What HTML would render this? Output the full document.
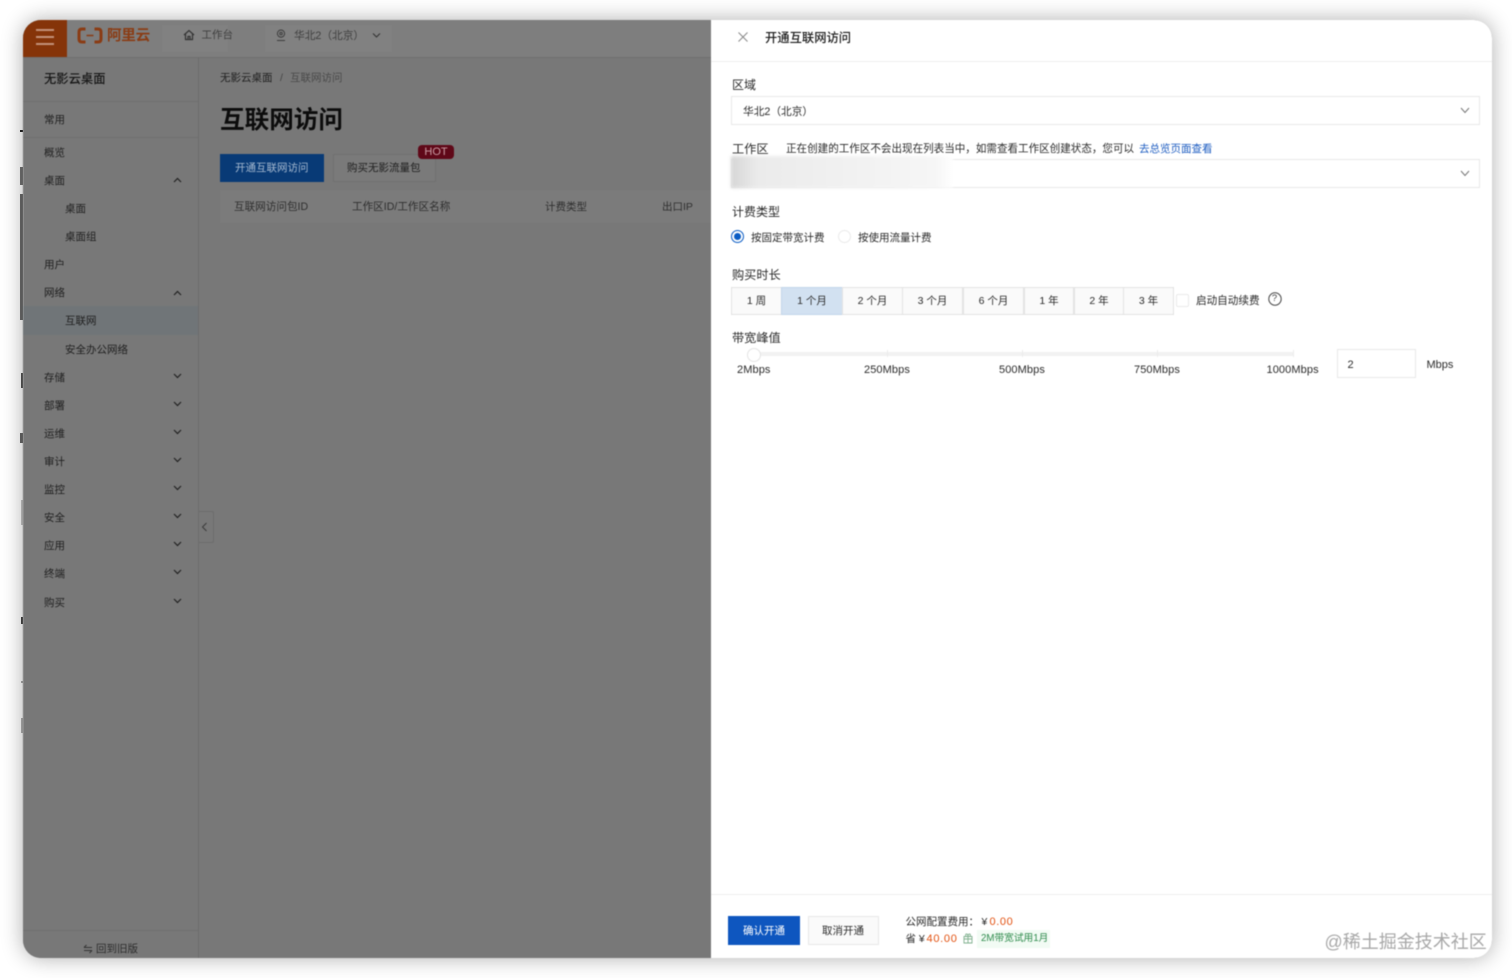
<!DOCTYPE html>
<html lang="zh-CN">
<head>
<meta charset="utf-8">
<title>开通互联网访问</title>
<style>
html,body{margin:0;padding:0;width:1512px;height:978px;overflow:hidden;background:#fff}
body{font-family:"Liberation Sans","Noto Sans CJK SC",sans-serif;position:relative}
*{box-sizing:border-box}
.win{position:absolute;left:23px;top:20px;width:1469px;height:938px;border-radius:18px;overflow:hidden;background:#787878;box-shadow:0 0 22px rgba(0,0,0,.32);filter:blur(.4px)}
.t{position:absolute;white-space:nowrap;line-height:16px;height:16px}
.m{font-size:10.5px;color:#1f1f1f}
.d{font-size:10.5px;color:#2b2b2b}
.l{font-size:12px;color:#2b2b2b}
svg{position:absolute;overflow:visible}
.left{position:absolute;left:0;top:0;width:688px;height:938px;background:#787878}
.top{position:absolute;left:0;top:0;width:688px;height:38px;background:#7e7e7e;border-bottom:1px solid #6f6f6f}
.burger{position:absolute;left:0;top:0;width:44px;height:37px;background:#853409}
.burger i{position:absolute;left:13px;width:18px;height:2px;background:#c2917a}
.side{position:absolute;left:175px;top:38px;width:1px;height:900px;background:#6c6c6c}
.hr{position:absolute;left:0;width:175px;height:1px;background:#707070}
.drawer{position:absolute;left:687.5px;top:0;width:782px;height:938px;background:#fff}
.box{position:absolute;border:1px solid #e8e8e8;background:#fff}
.seg{position:absolute;top:267px;height:28px;border:1px solid #e3e3e3;background:#fafafa;font-size:10.5px;color:#2b2b2b;text-align:center;line-height:26px;white-space:nowrap;padding-left:1px}
.tick{position:absolute;top:330px;width:1px;height:7px;background:#ececec}
.sl{position:absolute;top:343px;font-size:11px;line-height:14px;color:#2b2b2b;white-space:nowrap;letter-spacing:.1px}
.marks{position:absolute;background:#333}
</style>
</head>
<body>
<div class="marks" style="left:20px;top:130px;width:3px;height:2px;background:#222"></div>
<div class="marks" style="left:20px;top:167px;width:3px;height:18px;background:#707070"></div>
<div class="marks" style="left:20px;top:194px;width:3px;height:126px;background:#6a6a6a"></div>
<div class="marks" style="left:21px;top:373px;width:2px;height:15px;background:#555"></div>
<div class="marks" style="left:20px;top:433px;width:3px;height:10px;background:#666"></div>
<div class="marks" style="left:21px;top:500px;width:2px;height:25px;background:#c4c4c4"></div>
<div class="marks" style="left:21px;top:617px;width:2px;height:7px;background:#444"></div>
<div class="marks" style="left:21px;top:681px;width:2px;height:2px;background:#aaa"></div>
<div class="marks" style="left:21px;top:718px;width:2px;height:15px;background:#b0b0b0"></div>

<div class="win">
  <div class="left">
    <div class="top">
      <div class="burger"><i style="top:9px"></i><i style="top:16px"></i><i style="top:23px"></i></div>
      <svg style="left:54px;top:7px" width="26" height="17" viewBox="0 0 26 17" fill="none" stroke="#8a3c14" stroke-width="3"><path d="M8.5 2H5Q2 2 2 5V12Q2 15 5 15H8.5"/><path d="M17.5 2H21Q24 2 24 5V12Q24 15 21 15H17.5"/><path d="M9.5 8.5H16.5" stroke-width="1.6"/></svg>
      <div class="t" style="left:84px;top:5.5px;font-size:14.6px;height:20px;line-height:20px;font-weight:700;color:#8a3c14;letter-spacing:-.3px">阿里云</div>
      <div style="position:absolute;left:139px;top:5px;width:66px;height:27px;background:#818181"></div>
      <svg style="left:160px;top:9px" width="12" height="12" viewBox="0 0 12 12" fill="none" stroke="#333" stroke-width="1.2"><path d="M1 6L6 1.5L11 6M2.5 5V10.5H9.5V5"/><path d="M5 10V7.5H7V10"/></svg>
      <div class="t m" style="left:178.5px;top:7px;color:#3f3f3f">工作台</div>
      <div style="position:absolute;left:242px;top:5px;width:127px;height:27px;background:#818181"></div>
      <svg style="left:253px;top:9px" width="10" height="13" viewBox="0 0 10 13" fill="none" stroke="#3c3c3c" stroke-width="1"><circle cx="5" cy="4.6" r="3.6"/><circle cx="5" cy="4.6" r="1.2"/><path d="M1 11.5H9"/></svg>
      <div class="t m" style="left:271px;top:7.5px;color:#3f3f3f;font-size:10.7px">华北2（北京）</div>
      <svg style="left:349px;top:12px" width="9" height="7" viewBox="0 0 9 7" fill="none" stroke="#333" stroke-width="1.1"><path d="M1 1.5L4.5 5L8 1.5"/></svg>
    </div>

    <div class="side"></div>
    <div class="t" style="left:21px;top:51px;font-size:12.3px;font-weight:500;color:#161616">无影云桌面</div>
    <div class="hr" style="top:81px"></div>
    <div class="t m" style="left:21px;top:92px">常用</div>
    <div class="hr" style="top:117px"></div>
    <div class="t m" style="left:21px;top:125px">概览</div>
    <div class="t m" style="left:21px;top:153px">桌面</div>
    <div class="t m" style="left:42px;top:181px">桌面</div>
    <div class="t m" style="left:42px;top:209px">桌面组</div>
    <div class="t m" style="left:21px;top:237px">用户</div>
    <div class="t m" style="left:21px;top:265px">网络</div>
    <div style="position:absolute;left:0;top:286px;width:175px;height:29px;background:#707578"></div>
    <div class="t m" style="left:42px;top:293px">互联网</div>
    <div class="t m" style="left:42px;top:322px">安全办公网络</div>
    <div class="t m" style="left:21px;top:350px">存储</div>
    <div class="t m" style="left:21px;top:378px">部署</div>
    <div class="t m" style="left:21px;top:406px">运维</div>
    <div class="t m" style="left:21px;top:434px">审计</div>
    <div class="t m" style="left:21px;top:462px">监控</div>
    <div class="t m" style="left:21px;top:490px">安全</div>
    <div class="t m" style="left:21px;top:518px">应用</div>
    <div class="t m" style="left:21px;top:546px">终端</div>
    <div class="t m" style="left:21px;top:575px">购买</div>
    <svg style="left:150px;top:157px" width="9" height="6" viewBox="0 0 9 6" fill="none" stroke="#222" stroke-width="1.2"><path d="M1 5L4.5 1.5L8 5"/></svg>
    <svg style="left:150px;top:270px" width="9" height="6" viewBox="0 0 9 6" fill="none" stroke="#222" stroke-width="1.2"><path d="M1 5L4.5 1.5L8 5"/></svg>
    <svg style="left:150px;top:353px" width="9" height="6" viewBox="0 0 9 6" fill="none" stroke="#222" stroke-width="1.2"><path d="M1 1L4.5 4.5L8 1"/></svg>
    <svg style="left:150px;top:381px" width="9" height="6" viewBox="0 0 9 6" fill="none" stroke="#222" stroke-width="1.2"><path d="M1 1L4.5 4.5L8 1"/></svg>
    <svg style="left:150px;top:409px" width="9" height="6" viewBox="0 0 9 6" fill="none" stroke="#222" stroke-width="1.2"><path d="M1 1L4.5 4.5L8 1"/></svg>
    <svg style="left:150px;top:437px" width="9" height="6" viewBox="0 0 9 6" fill="none" stroke="#222" stroke-width="1.2"><path d="M1 1L4.5 4.5L8 1"/></svg>
    <svg style="left:150px;top:465px" width="9" height="6" viewBox="0 0 9 6" fill="none" stroke="#222" stroke-width="1.2"><path d="M1 1L4.5 4.5L8 1"/></svg>
    <svg style="left:150px;top:493px" width="9" height="6" viewBox="0 0 9 6" fill="none" stroke="#222" stroke-width="1.2"><path d="M1 1L4.5 4.5L8 1"/></svg>
    <svg style="left:150px;top:521px" width="9" height="6" viewBox="0 0 9 6" fill="none" stroke="#222" stroke-width="1.2"><path d="M1 1L4.5 4.5L8 1"/></svg>
    <svg style="left:150px;top:549px" width="9" height="6" viewBox="0 0 9 6" fill="none" stroke="#222" stroke-width="1.2"><path d="M1 1L4.5 4.5L8 1"/></svg>
    <svg style="left:150px;top:578px" width="9" height="6" viewBox="0 0 9 6" fill="none" stroke="#222" stroke-width="1.2"><path d="M1 1L4.5 4.5L8 1"/></svg>
    <div class="hr" style="top:910px"></div>
    <svg style="left:60px;top:924px" width="10" height="10" viewBox="0 0 10 10" fill="none" stroke="#333" stroke-width="1"><path d="M1 3.5H9M1 3.5L3.5 1M1 6.5H9M9 6.5L6.5 9"/></svg>
    <div class="t m" style="left:73px;top:921px;color:#2c2c2c">回到旧版</div>
    <div style="position:absolute;left:176px;top:491px;width:15px;height:32px;border:1px solid #6c6c6c;border-left:0;border-radius:0 2px 2px 0"></div>
    <svg style="left:178px;top:502px" width="7" height="10" viewBox="0 0 7 10" fill="none" stroke="#3a3a3a" stroke-width="1"><path d="M5.5 1L1.5 5L5.5 9"/></svg>

    <div class="t m" style="left:197px;top:49.5px;color:#1f1f1f">无影云桌面</div>
    <div class="t m" style="left:257px;top:49.5px;color:#444">/</div>
    <div class="t m" style="left:267px;top:49.5px;color:#4a4a4a">互联网访问</div>
    <div class="t" style="left:197px;top:83.5px;font-size:24.6px;height:34px;line-height:34px;font-weight:700;color:#0c0c0c">互联网访问</div>
    <div style="position:absolute;left:197px;top:134px;width:103.5px;height:28px;background:#083a76;color:#a5b9d0;font-size:10.5px;text-align:center;line-height:28px">开通互联网访问</div>
    <div style="position:absolute;left:310px;top:134px;width:102.5px;height:28px;background:#7a7a7a;border:1px solid #707070;color:#1f1f1f;font-size:10.5px;text-align:center;line-height:26px;padding-right:1px">购买无影流量包</div>
    <div style="position:absolute;left:395px;top:125px;width:36px;height:14px;border-radius:4px;background:#5f0818;color:#c89aa2;font-size:11px;text-align:center;line-height:15px">HOT</div>
    <div style="position:absolute;left:197px;top:170px;width:491px;height:33px;background:#7b7b7b"></div>
    <div class="t m" style="left:211px;top:179px;color:#2f2f2f;font-size:10.6px">互联网访问包ID</div>
    <div class="t m" style="left:329px;top:179px;color:#2f2f2f;font-size:10.6px">工作区ID/工作区名称</div>
    <div class="t m" style="left:522px;top:179px;color:#2f2f2f">计费类型</div>
    <div class="t m" style="left:639px;top:179px;color:#2f2f2f">出口IP</div>
  </div>

  <div class="drawer">
    <svg style="left:27.5px;top:12px" width="10" height="10" viewBox="0 0 10 10" fill="none" stroke="#888" stroke-width="1"><path d="M.5.5L9.5 9.5M9.5.5L.5 9.5"/></svg>
    <div class="t" style="left:54.5px;top:10px;font-size:12.3px;font-weight:500;color:#1c1c1c">开通互联网访问</div>
    <div style="position:absolute;left:0;top:41px;width:782px;height:1px;background:#eee"></div>

    <div class="t l" style="left:21.5px;top:57px">区域</div>
    <div class="box" style="left:20.5px;top:76px;width:749px;height:29px"></div>
    <div class="t d" style="left:32.5px;top:83.5px;font-size:10.7px">华北2（北京）</div>
    <svg style="left:749.5px;top:87px" width="10" height="7" viewBox="0 0 10 7" fill="none" stroke="#777" stroke-width="1"><path d="M1 1L5 5.5L9 1"/></svg>

    <div class="t l" style="left:21.5px;top:121px;font-size:12.2px">工作区</div>
    <div class="t d" style="left:75.5px;top:121px;font-size:10.55px">正在创建的工作区不会出现在列表当中，如需查看工作区创建状态，您可以</div>
    <div class="t d" style="left:428.5px;top:121px;color:#1b5bc0">去总览页面查看</div>
    <div class="box" style="left:20.5px;top:139px;width:749px;height:29px"></div>
    <div style="position:absolute;left:20.5px;top:136px;width:222px;height:32px;background:linear-gradient(90deg,#d6d6d6 0,#ebebeb 12%,#f2f2f2 60%,#f6f6f6 92%,#fff 100%);filter:blur(1.5px)"></div>
    <svg style="left:749.5px;top:150px" width="10" height="7" viewBox="0 0 10 7" fill="none" stroke="#777" stroke-width="1"><path d="M1 1L5 5.5L9 1"/></svg>

    <div class="t l" style="left:21.5px;top:183.5px">计费类型</div>
    <div style="position:absolute;left:20px;top:210px;width:13px;height:13px;border-radius:50%;border:1px solid #0a5cc4;background:#fff"></div>
    <div style="position:absolute;left:23px;top:213px;width:7px;height:7px;border-radius:50%;background:#0a5cc4"></div>
    <div class="t d" style="left:40.5px;top:210px">按固定带宽计费</div>
    <div style="position:absolute;left:127px;top:210px;width:13px;height:13px;border-radius:50%;border:1px solid #eaeaea;background:#fff"></div>
    <div class="t d" style="left:147.5px;top:210px">按使用流量计费</div>

    <div class="t l" style="left:21.5px;top:247px;font-size:12.2px">购买时长</div>
    <div class="seg" style="left:20px;width:51px">1 周</div>
    <div class="seg" style="left:70px;width:62px;background:#d2e1f1;border-color:#c3d6ea">1 个月</div>
    <div class="seg" style="left:131px;width:61px">2 个月</div>
    <div class="seg" style="left:191px;width:61px">3 个月</div>
    <div class="seg" style="left:252px;width:61px">6 个月</div>
    <div class="seg" style="left:313px;width:50px">1 年</div>
    <div class="seg" style="left:363px;width:50px">2 年</div>
    <div class="seg" style="left:412px;width:51px">3 年</div>
    <div style="position:absolute;left:465px;top:274px;width:13px;height:13px;border:1px solid #eaeaea;border-radius:2px"></div>
    <div class="t d" style="left:485.5px;top:273px;font-size:10.6px">启动自动续费</div>
    <svg style="left:557px;top:272px" width="14" height="14" viewBox="0 0 14 14" fill="none" stroke="#444" stroke-width="1"><circle cx="7" cy="7" r="6.2"/></svg>
    <div class="t" style="left:557px;top:271px;width:14px;text-align:center;font-size:9.5px;color:#444">?</div>

    <div class="t l" style="left:21.5px;top:310px;font-size:12.2px">带宽峰值</div>
    <div style="position:absolute;left:43px;top:332px;width:540px;height:4px;background:#f2f2f2"></div>
    <div class="tick" style="left:176px"></div>
    <div class="tick" style="left:311px"></div>
    <div class="tick" style="left:446px"></div>
    <div class="tick" style="left:582px"></div>
    <div style="position:absolute;left:36px;top:328px;width:14px;height:14px;border-radius:50%;border:1px solid #e4e4e4;background:#fff"></div>
    <div class="sl" style="left:26.5px">2Mbps</div>
    <div class="sl" style="left:153.5px">250Mbps</div>
    <div class="sl" style="left:288.5px">500Mbps</div>
    <div class="sl" style="left:423.5px">750Mbps</div>
    <div class="sl" style="left:556px">1000Mbps</div>
    <div class="box" style="left:626px;top:329px;width:79px;height:29px"></div>
    <div class="t d" style="left:637px;top:337px;font-size:11px">2</div>
    <div class="t d" style="left:716px;top:337px;font-size:11px">Mbps</div>

    <div style="position:absolute;left:0;top:874px;width:782px;height:1px;background:#eee"></div>
    <div style="position:absolute;left:17.5px;top:896px;width:72px;height:29px;background:#0e56bf;color:#fff;font-size:10.5px;text-align:center;line-height:31px">确认开通</div>
    <div style="position:absolute;left:97px;top:896px;width:71px;height:29px;background:#fafafa;border:1px solid #e8e8e8;color:#2b2b2b;font-size:10.5px;text-align:center;line-height:29px">取消开通</div>
    <div class="t d" style="left:195px;top:893.5px">公网配置费用：</div>
    <div class="t d" style="left:271px;top:893.5px">¥</div>
    <div class="t" style="left:279px;top:893.5px;font-size:11px;letter-spacing:.6px;color:#e2500f;font-weight:500">0.00</div>
    <div class="t d" style="left:195px;top:911px">省 ¥</div>
    <div class="t" style="left:216px;top:911px;font-size:11px;letter-spacing:.7px;color:#e2500f;font-weight:500">40.00</div>
    <svg style="left:252.5px;top:913px" width="10" height="11" viewBox="0 0 10 11" fill="none" stroke="#7fb08e" stroke-width=".9"><path d="M1 3.5H9V10H1ZM5 3.5V10M1 6H9M3 3.5Q2 1 3.5 1Q5 1 5 3.5Q5 1 6.5 1Q8 1 7 3.5"/></svg>
    <div style="position:absolute;left:266px;top:910px;width:73px;height:18px;background:#f2fbf4"></div>
    <div class="t" style="left:270.5px;top:911px;font-size:9.7px;color:#2e8b4c">2M带宽试用1月</div>
    <div class="t" style="left:614px;top:910px;font-size:18px;height:24px;line-height:24px;color:#a8a8a8">@稀土掘金技术社区</div>
  </div>
</div>
</body>
</html>
